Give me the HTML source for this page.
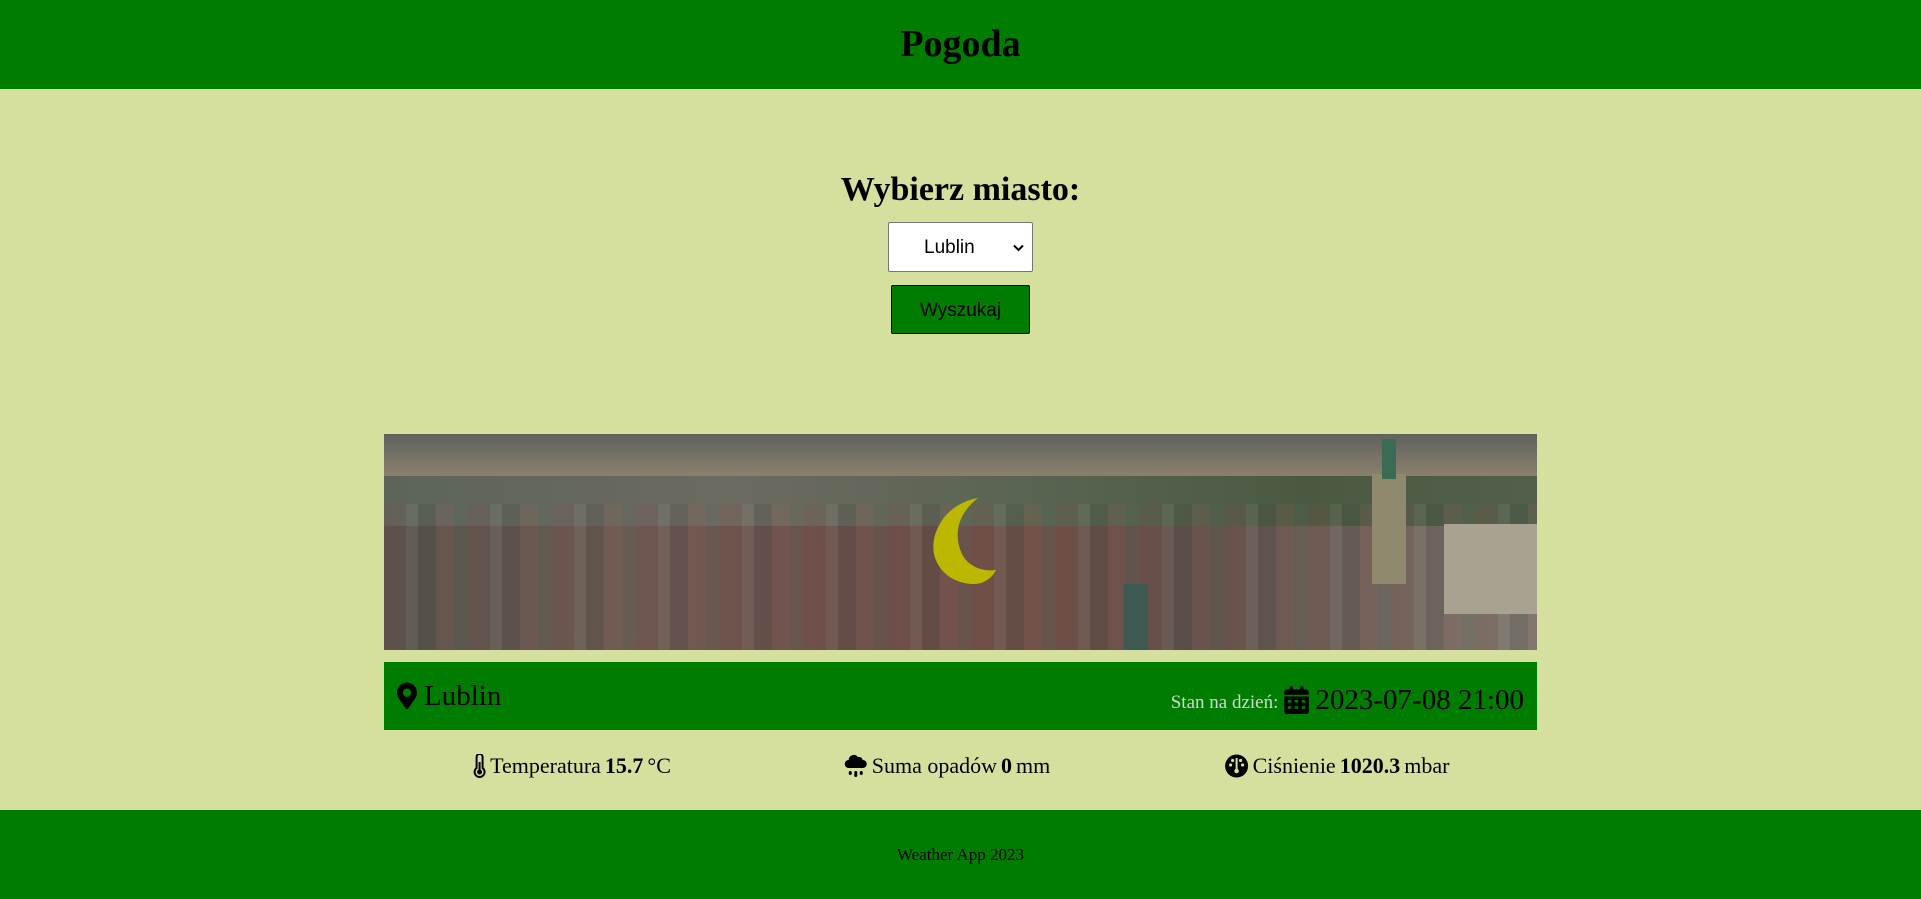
<!DOCTYPE html>
<html><head><meta charset="utf-8"><style>
*{margin:0;padding:0;box-sizing:border-box}
html,body{width:1921px;height:899px;overflow:hidden;background:#d5e09e;font-family:"Liberation Serif",serif;color:#000}
header{position:absolute;left:0;top:0;width:1921px;height:89px;background:#007c00;text-align:center}
header h1{font-size:38px;line-height:89px;font-weight:bold}
.h2{position:absolute;top:168px;width:1921px;text-align:center;font-size:34px;font-weight:bold;line-height:44px}
.sel{position:absolute;left:888px;top:222px;width:145px;height:50px;background:#fff;border:1px solid #767676;border-radius:2px;font-family:"Liberation Sans",sans-serif;font-size:19px;line-height:50px;padding-left:35px}
.sel svg{position:absolute;right:8px;top:21px}
.btn{position:absolute;left:891px;top:285px;width:139px;height:49px;background:#007c00;border:1px solid #000;border-radius:2px;font-family:"Liberation Sans",sans-serif;font-size:19px;line-height:49px;text-align:center}
.img{position:absolute;left:384px;top:434px;width:1153px;height:216px;overflow:hidden;background:#5a554c}
.img div{position:absolute}
.bar{position:absolute;left:384px;top:662px;width:1153px;height:68px;background:#007c00}
.city{position:absolute;left:13px;top:16px;font-size:29px;line-height:36px;display:flex;align-items:center;gap:7px}
.date{position:absolute;right:13px;top:17px;font-size:29px;line-height:36px;display:flex;align-items:center}
.date small{font-size:19px;color:#cfd8cf;margin-right:6px;margin-top:6px}
.stat{position:absolute;top:752px;font-size:22px;line-height:28px;display:flex;align-items:center;gap:4px;transform:translateX(-50%);white-space:nowrap}
footer{position:absolute;left:0;top:810px;width:1921px;height:89px;background:#007c00;text-align:center;font-size:17px;line-height:89px}
</style></head><body>
<header><h1>Pogoda</h1></header>
<div class="h2">Wybierz miasto:</div>
<div class="sel">Lublin<svg width="11" height="8" viewBox="0 0 11 8"><path d="M1 1.5 5.5 6 10 1.5" stroke="#000" stroke-width="2" fill="none"/></svg></div>
<div class="btn">Wyszukaj</div>
<div class="img">
<div style="left:0;top:0;width:1153px;height:42px;background:linear-gradient(180deg,#5f625d,#7a7466 60%,#8a806d)"></div>
<div style="left:0;top:42px;width:1153px;height:50px;background:linear-gradient(90deg,#5c6558,#6d6a60 30%,#56634f 60%,#4a5a42 80%,#50604b)"></div>
<div style="left:0;top:92px;width:1153px;height:124px;background:linear-gradient(90deg,#55524a,#6a5a52 20%,#6a4f4a 40%,#6c5048 55%,#5f504a 70%,#6e625a 85%,#7e7a70)"></div>
<div style="left:0;top:70px;width:1153px;height:146px;opacity:.15;background:repeating-linear-gradient(90deg,#8a4a48 0 22px,#9a9486 22px 34px,#3e3a36 34px 52px,#a06058 52px 70px,#5a6a5a 70px 84px)"></div>
<div style="left:988px;top:40px;width:34px;height:110px;background:#8f8a6e"></div>
<div style="left:998px;top:5px;width:14px;height:40px;background:#3b6a55"></div>
<div style="left:1060px;top:90px;width:93px;height:90px;background:#a8a290"></div>
<div style="left:740px;top:150px;width:24px;height:66px;background:#3d5a50"></div>
<svg style="position:absolute;left:538px;top:64px" width="76" height="86" viewBox="0 0 76 86"><path d="M56 0C22 6 8 36 12 56 16 74 32 86 52 86 62 86 70 80 74 72 60 74 46 68 40 56 30 34 38 14 56 0Z" fill="#bcb700"/></svg>
</div>
<div class="bar">
<div class="city"><svg width="20" height="28" viewBox="0 0 384 512"><path d="M172 501C27 291 0 269 0 192 0 86 86 0 192 0s192 86 192 192c0 77-27 99-172 309-10 14-30 14-40 0zM192 272a80 80 0 1 0 0-160 80 80 0 0 0 0 160z"/></svg>Lublin</div>
<div class="date"><small>Stan na dzień:</small><svg width="25" height="28" viewBox="0 0 448 512" style="margin-right:6px"><path d="M96 32V64H48C21 64 0 85 0 112v48h448v-48c0-27-21-48-48-48h-48V32a32 32 0 0 0-64 0v32H160V32a32 32 0 0 0-64 0zM448 192H0v272c0 27 21 48 48 48h352c27 0 48-21 48-48zM64 256h64v48H64zm128 0h64v48h-64zm128 0h64v48h-64zM64 368h64v48H64zm128 0h64v48h-64zm128 0h64v48h-64z"/></svg>2023-07-08 21:00</div>
</div>
<div class="stat" style="left:572px"><svg width="13" height="24" viewBox="0 0 13 24"><path d="M3.5 3a3 3 0 0 1 6 0v11a5 5 0 1 1-6 0z" fill="none" stroke="#000" stroke-width="2"/><circle cx="6.5" cy="18" r="2.5"/><rect x="5.5" y="8" width="2" height="9"/></svg>Temperatura <b>15.7</b> °C</div>
<div class="stat" style="left:947px"><svg width="24" height="24" viewBox="0 0 24 24"><path d="M5 14a4 4 0 0 1 0-8 5 5 0 0 1 9-3 4 4 0 0 1 5 3 4 4 0 0 1 0 8z"/><rect x="5" y="17" width="3" height="4" rx="1.5"/><rect x="10.5" y="17" width="3" height="6" rx="1.5"/><rect x="16" y="17" width="3" height="4" rx="1.5"/></svg>Suma opadów <b>0</b> mm</div>
<div class="stat" style="left:1337px"><svg width="24" height="24" viewBox="0 0 24 24"><circle cx="12" cy="12" r="11.5"/><circle cx="6" cy="11" r="1.6" fill="#d5e09e"/><circle cx="18" cy="11" r="1.6" fill="#d5e09e"/><circle cx="8" cy="6.5" r="1.6" fill="#d5e09e"/><circle cx="16" cy="6.5" r="1.6" fill="#d5e09e"/><rect x="11" y="4" width="2" height="12" fill="#d5e09e"/><circle cx="12" cy="17" r="2.3" fill="#d5e09e"/></svg>Ciśnienie <b>1020.3</b> mbar</div>
<footer>Weather App 2023</footer>
</body></html>
